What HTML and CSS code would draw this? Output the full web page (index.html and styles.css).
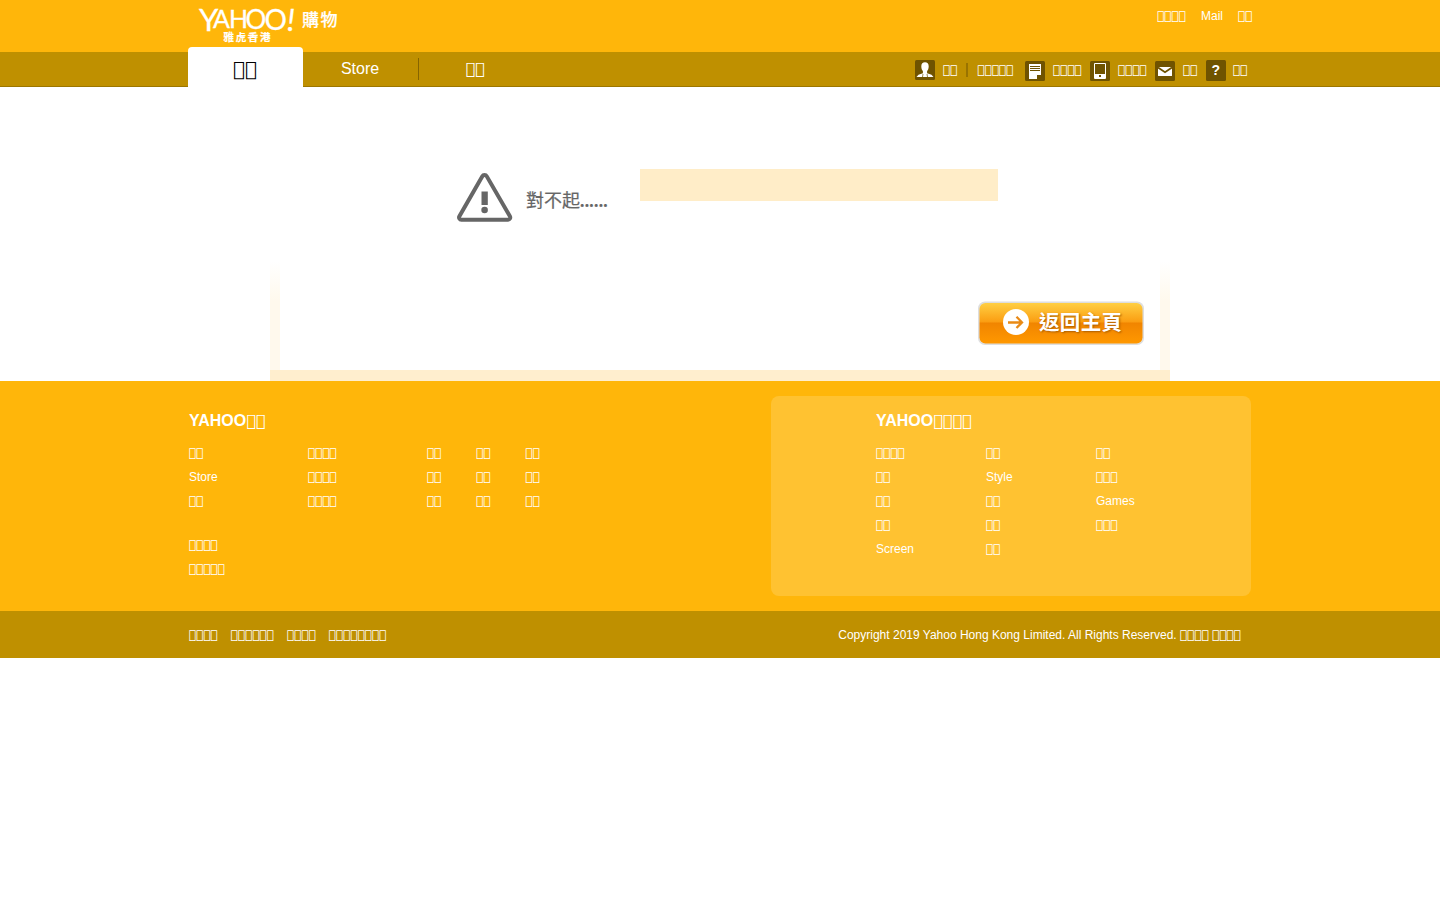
FILE: index.html
```html
<!DOCTYPE html>
<html lang="zh-Hant">
<head>
<meta charset="utf-8">
<title>Yahoo Shopping</title>
<link rel="stylesheet" href="styles.css">
</head>
<body>
<header class="masthead">
  <div class="wrap masthead-row">
    <svg class="logo" width="152" height="46" viewBox="0 0 152 46">
      <text class="logo-word"><tspan x="11" y="30.500" font-size="31">Y</tspan><tspan x="25" y="28" font-size="25">A</tspan><tspan x="41" y="28" font-size="25">H</tspan><tspan x="57.500" y="28.500" font-size="26">O</tspan><tspan x="76.500" y="29.500" font-size="28">O</tspan><tspan x="99" y="30.500" font-size="31" font-style="italic">!</tspan></text>
      <text class="logo-cjk" x="114" y="25.500" font-size="17" textLength="35.500">購物</text>
      <text class="logo-cjk heavy" x="35.500" y="41" font-size="10.500" textLength="47">雅虎香港</text>
    </svg>
    <nav class="top-links"><a class="g">&#xE83A;&#xE83A;&#xE83A;&#xE83A;</a><a>Mail</a><a class="g">&#xE83A;&#xE83A;</a></nav>
  </div>
</header>
<div class="navbar">
  <div class="wrap navbar-row">
    <a class="tab active g">&#xE83A;&#xE83A;</a>
    <a class="tab store">Store</a>
    <i class="tab-line"></i>
    <a class="tab last g">&#xE83A;&#xE83A;</a>
    <div class="tools g">
      <svg class="ico" width="20" height="20" viewBox="0 0 20 20"><rect width="20" height="20" rx="1.500" fill="#6f5300"/><path d="M10 2.300c2.300 0 3.700 1.500 3.700 3.900 0 2.300-.7 3.800-1.600 4.800v2.300l4.400 1.400 2 2.400H1.500l2-2.400 4.400-1.400V11C7 10 6.300 8.500 6.300 6.200c0-2.400 1.400-3.900 3.700-3.900z" fill="#fff"/><path d="M8 14l-.5 3M12 14l.5 3" stroke="#6f5300" stroke-width=".7"/></svg>
      <a class="t-login">&#xE83A;&#xE83A;</a><i class="tool-line"></i><a class="t-reg">&#xE83A;&#xE83A;&#xE83A;&#xE83A;&#xE83A;</a>
      <svg class="ico low" width="20" height="20" viewBox="0 0 20 20"><rect width="20" height="20" rx="1.500" fill="#6f5300"/><path d="M4 3h12v11h-4v4H4z" fill="#fff"/><path d="M5 5.500h10M5 7.500h10M5 9.500h10" stroke="#6f5300"/></svg>
      <a class="t-four">&#xE83A;&#xE83A;&#xE83A;&#xE83A;</a>
      <svg class="ico low" width="20" height="20" viewBox="0 0 20 20"><rect width="20" height="20" rx="1.500" fill="#6f5300"/><rect x="4" y="2" width="12" height="16" rx="1" fill="#fff"/><path d="M5 3h10v10H5zM9 14h2v2H9z" fill="#6f5300"/></svg>
      <a class="t-four">&#xE83A;&#xE83A;&#xE83A;&#xE83A;</a>
      <svg class="ico low" width="20" height="20" viewBox="0 0 20 20"><rect width="20" height="20" rx="1.500" fill="#6f5300"/><rect x="3" y="6" width="14" height="9" rx=".5" fill="#fff"/><path d="M3 6.500l7 4.700 7-4.700" fill="none" stroke="#6f5300" stroke-width="1.800"/></svg>
      <a class="t-two">&#xE83A;&#xE83A;</a>
      <svg class="ico help" width="20" height="21" viewBox="0 0 20 21"><rect width="20" height="21" rx="1.500" fill="#6f5300"/><text x="9.700" y="15" text-anchor="middle" font-size="14" font-weight="bold" fill="#fff">?</text></svg>
      <a class="t-last">&#xE83A;&#xE83A;</a>
    </div>
  </div>
</div>
<main class="error">
  <div class="message">
    <svg class="warning" width="57" height="52" viewBox="0 0 57 52"><path d="M28.500 4c1 0 1.800.5 2.300 1.400L53.900 45.300c.9 1.600-.1 3.500-2 3.500H5.400c-1.900 0-2.900-1.900-2-3.500L26.200 5.400c.5-.9 1.300-1.400 2.300-1.400z" fill="none" stroke="#666" stroke-width="4"/><path d="M25.500 20.500h6.300v13.500h-6.300z" fill="#666"/><circle cx="28.600" cy="39" r="3.300" fill="#666"/></svg>
    <svg class="sorry" width="84" height="28" viewBox="0 0 84 28"><text y="21" font-size="18"><tspan x="0">對不起</tspan><tspan class="dots" x="53.500">......</tspan></text></svg>
    <div class="notice"></div>
  </div>
  <div class="panel">
    <svg class="home" width="168" height="45" viewBox="0 0 168 45">
      <defs><linearGradient id="gloss" x2="0" y2="1"><stop offset="0" stop-color="#ffcf43"/><stop offset=".46" stop-color="#fb9e12"/><stop offset=".5" stop-color="#f18500"/><stop offset="1" stop-color="#ff9800"/></linearGradient></defs>
      <rect x="1" y=".5" width="166" height="43.500" rx="7" fill="#dedede"/><rect x="2.500" y="2" width="163" height="40.500" rx="6" fill="url(#gloss)"/>
      <circle cx="39" cy="21" r="13" fill="#fff"/><path d="M31 21.500h14M39.500 15.700l5.500 5.800-5.500 5.500" fill="none" stroke="#e98a16" stroke-width="2.300"/>
      <text class="home-label" x="62" y="29" font-size="20.500" textLength="83">返回主頁</text>
    </svg>
  </div>
</main>
<footer>
  <div class="wrap directory">
    <section class="shopping">
      <h2>YAHOO<span class="g">&#xE83A;&#xE83A;</span></h2>
      <div class="cols g">
        <ul class="wide"><li>&#xE83A;&#xE83A;</li><li class="latin">Store</li><li>&#xE83A;&#xE83A;</li></ul>
        <ul class="wide"><li>&#xE83A;&#xE83A;&#xE83A;&#xE83A;</li><li>&#xE83A;&#xE83A;&#xE83A;&#xE83A;</li><li>&#xE83A;&#xE83A;&#xE83A;&#xE83A;</li></ul>
        <ul class="slim"><li>&#xE83A;&#xE83A;</li><li>&#xE83A;&#xE83A;</li><li>&#xE83A;&#xE83A;</li></ul>
        <ul class="slim"><li>&#xE83A;&#xE83A;</li><li>&#xE83A;&#xE83A;</li><li>&#xE83A;&#xE83A;</li></ul>
        <ul class="slim"><li>&#xE83A;&#xE83A;</li><li>&#xE83A;&#xE83A;</li><li>&#xE83A;&#xE83A;</li></ul>
      </div>
      <ul class="extra g"><li>&#xE83A;&#xE83A;&#xE83A;&#xE83A;</li><li>&#xE83A;&#xE83A;&#xE83A;&#xE83A;&#xE83A;</li></ul>
    </section>
    <section class="network">
      <h2>YAHOO<span class="g">&#xE83A;&#xE83A;&#xE83A;&#xE83A;</span></h2>
      <div class="cols g">
        <ul><li>&#xE83A;&#xE83A;&#xE83A;&#xE83A;</li><li>&#xE83A;&#xE83A;</li><li>&#xE83A;&#xE83A;</li><li>&#xE83A;&#xE83A;</li><li class="latin">Screen</li></ul>
        <ul><li>&#xE83A;&#xE83A;</li><li class="latin">Style</li><li>&#xE83A;&#xE83A;</li><li>&#xE83A;&#xE83A;</li><li>&#xE83A;&#xE83A;</li></ul>
        <ul><li>&#xE83A;&#xE83A;</li><li>&#xE83A;&#xE83A;&#xE83A;</li><li class="latin">Games</li><li>&#xE83A;&#xE83A;&#xE83A;</li></ul>
      </div>
    </section>
  </div>
  <div class="legal">
    <div class="wrap legal-row">
      <nav class="g"><a>&#xE83A;&#xE83A;&#xE83A;&#xE83A;</a><a>&#xE83A;&#xE83A;&#xE83A;&#xE83A;&#xE83A;&#xE83A;</a><a>&#xE83A;&#xE83A;&#xE83A;&#xE83A;</a><a>&#xE83A;&#xE83A;&#xE83A;&#xE83A;&#xE83A;&#xE83A;&#xE83A;&#xE83A;</a></nav>
      <p>Copyright 2019 Yahoo Hong Kong Limited. All Rights Reserved. <span class="g">&#xE83A;&#xE83A;&#xE83A;&#xE83A;</span> <span class="g">&#xE83A;&#xE83A;&#xE83A;&#xE83A;</span></p>
    </div>
  </div>
</footer>
</body>
</html>
```
FILE: styles.css
```css
* { box-sizing: border-box; }
body { margin: 0; background: #fff; color: #fff; font: 12px/24px "Liberation Sans", Arial, sans-serif; }
h2, ul, p { margin: 0; padding: 0; list-style: none; }
.g { font-family: "DejaVu Sans", sans-serif; font-weight: 400; }
.latin, .help { font-family: "Liberation Sans", Arial, sans-serif; }
.wrap { width: 1064px; margin: 0 auto; }
.masthead { height: 52px; background: #ffb60a; }
.masthead-row { display: flex; justify-content: space-between; }
.logo { display: block; fill: #fff; }
.logo-word { font-family: Lato, sans-serif; stroke: #fff; stroke-width: .3; }
.logo-cjk { font-family: "Noto Sans CJK TC", sans-serif; font-weight: 500; stroke: #fff; stroke-width: .2; }
.heavy { font-weight: 700; }
.top-links { display: flex; gap: 15px; margin-right: -.4px; padding-top: 4px; }
.navbar { height: 35px; background: #bf9000; border-bottom: 1px solid #9c7600; }
.navbar-row { display: flex; height: 35px; }
.tab { width: 115px; height: 35px; font-size: 16px; line-height: 33px; text-align: center; white-space: nowrap; }
.tab.store { padding-right: 1px; }
.tab.last { padding-right: 3px; }
.tab.active { height: 40px; margin-top: -5px; padding: 6px 1px 0 0; background: #fff; color: #000; font-size: 20px; border-radius: 4px 4px 0 0; }
.tab-line { width: 1px; height: 22px; margin-top: 6px; background: #866500; }
.tools { display: flex; margin-left: auto; padding-top: 6px; white-space: nowrap; }
.ico { flex: none; margin: 2px 8px 0 0; }
.ico.low { margin-top: 3px; }
.ico.help { margin-right: 7px; }
.t-login { width: 23px; }
.tool-line { width: 2px; height: 14px; margin: 5px 9.500px 0 0; background: #997300; }
.t-reg { width: 47.500px; }
.t-four { width: 37px; }
.t-two { width: 23px; }
.t-last { width: 19px; }
.error { width: 900px; height: 294px; margin: 0 auto; }
.message { display: flex; height: 174px; padding: 82px 0 0 186px; }
.warning { flex: none; margin-top: 2px; }
.sorry { flex: none; margin: 17px 0 0 13px; fill: #666; font-family: "Noto Sans CJK TC", sans-serif; stroke: #666; stroke-width: .2; }
.dots { font-weight: 500; letter-spacing: -.7px; }
.notice { width: 358px; height: 32px; margin-left: 30px; background: #ffedc8; }
.panel { display: flex; justify-content: flex-end; height: 120px; padding: 40px 25px 0 0; background: linear-gradient(#ffeece, #ffeece) left bottom / 100% 11px no-repeat, linear-gradient(#fff, #fff9ed 40px) left top / 10px 100% no-repeat, linear-gradient(#fff, #fff9ed 40px) right top / 10px 100% no-repeat; }
.home-label { fill: #fff; font-family: "Noto Sans CJK TC", sans-serif; font-weight: 700; text-shadow: 1px 1px 2px #a85c00; }
.directory { display: flex; justify-content: space-between; height: 230px; padding: 15px 1px; }
footer { background: #ffb60a; }
h2 { font-size: 16px; line-height: 24px; }
.shopping { padding-top: 13px; }
.cols { display: flex; margin-top: 8px; }
.wide { width: 119px; }
.slim { width: 49.300px; }
.extra { margin-top: 20px; }
.network { width: 480px; height: 200px; padding: 13px 0 0 105px; border-radius: 8px; background: #ffc231; }
.network ul { width: 110px; }
.legal { height: 47px; background: #bf9000; }
.legal-row { display: flex; justify-content: space-between; padding: 12px 11px 0 1px; }
.legal nav { display: flex; gap: 13px; }
```
